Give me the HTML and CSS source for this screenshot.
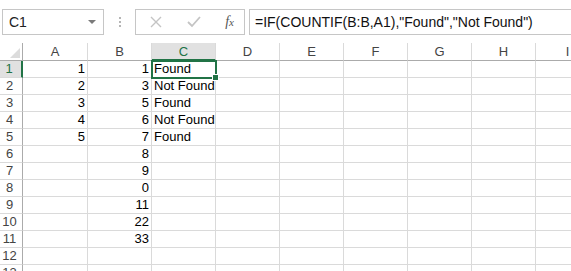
FILE: index.html
```html
<!DOCTYPE html>
<html lang="en">
<head>
  <meta charset="UTF-8" />
  <title>Excel - COUNTIF</title>
  <link rel="stylesheet" href="styles.css">
</head>
<body>

  <div class="toolbar">
    <div class="namebox">
      <span>C1</span>
      <svg class="caret" width="8" height="5" viewBox="0 0 8 5"><path d="M0 0h8L4 4z" fill="#7a7a7a"/></svg>
    </div>
    <div class="dots"><i></i><i></i><i></i></div>
    <div class="fxbtns">
      <svg width="12" height="12" viewBox="0 0 12 12"><path d="M1 1l10 10M11 1L1 11" stroke="#c4c4c4" stroke-width="1.4"/></svg>
      <svg width="14" height="12" viewBox="0 0 14 12"><path d="M1 6l4 4 8-9" stroke="#c4c4c4" stroke-width="1.8" fill="none"/></svg>
      <span class="fx">f<small>x</small></span>
    </div>
    <div class="formula">=IF(COUNTIF(B:B,A1),"Found","Not Found")</div>
  </div>

  <div class="sheet" id="sheet"></div>

  <script>
    const cols = ['A', 'B', 'C', 'D', 'E', 'F', 'G', 'H', 'I'];
    const data = {
      1: { A: 1, B: 1, C: 'Found' },
      2: { A: 2, B: 3, C: 'Not Found' },
      3: { A: 3, B: 5, C: 'Found' },
      4: { A: 4, B: 6, C: 'Not Found' },
      5: { A: 5, B: 7, C: 'Found' },
      6: { B: 8 },
      7: { B: 9 },
      8: { B: 0 },
      9: { B: 11 },
      10: { B: 22 },
      11: { B: 33 }
    };

    const sheet = document.getElementById('sheet');
    let html = '<div class="corner"></div>';
    cols.forEach(c => {
      html += '<div class="colhead' + (c === 'C' ? ' active' : '') + '">' + c + '</div>';
    });
    for (let r = 1; r <= 13; r++) {
      html += '<div class="rowhead' + (r === 1 ? ' active' : '') + '">' + r + '</div>';
      cols.forEach(c => {
        const v = data[r] && data[r][c];
        let cls = 'cell';
        if (typeof v === 'number') cls += ' num';
        if (r === 1 && c === 'C') cls += ' selected';
        html += '<div class="' + cls + '">' + (v === undefined ? '' : v) + '</div>';
      });
    }
    sheet.innerHTML = html;
  </script>

</body>
</html>
```

FILE: styles.css
```css
body {
  margin: 0;
  background: #fff;
  font-family: 'Liberation Sans', Arial, sans-serif;
  color: #000;
  overflow: hidden;
}

.toolbar {
  display: flex;
  align-items: center;
  padding: 9px 0 0 2px;
  height: 26px;
}

.namebox {
  box-sizing: border-box;
  width: 102px;
  height: 26px;
  border: 1px solid #c6c6c6;
  display: flex;
  align-items: center;
  justify-content: space-between;
  padding: 0 7px 0 6px;
  font-size: 14px;
  color: #222;
}

.namebox .caret {
  margin-top: 1px;
}

.dots {
  width: 31px;
  display: flex;
  flex-direction: column;
  align-items: center;
  gap: 2px;
}

.dots i {
  width: 2px;
  height: 2px;
  background: #b5b5b5;
}

.fxbtns {
  box-sizing: border-box;
  width: 110px;
  height: 26px;
  border: 1px solid #c6c6c6;
  display: flex;
  align-items: center;
  justify-content: space-between;
  padding: 0 10px 0 14px;
}

.fx {
  font-family: 'Liberation Serif', serif;
  font-style: italic;
  font-size: 14px;
  color: #555;
}

.fx small {
  font-size: 11px;
}

.formula {
  box-sizing: border-box;
  flex: 1;
  height: 26px;
  margin-left: 4px;
  border: 1px solid #c6c6c6;
  border-right: none;
  padding: 0 0 0 5px;
  font-size: 14px;
  line-height: 24px;
  color: #111;
  white-space: nowrap;
}

.sheet {
  display: grid;
  grid-template-columns: 23px 65px repeat(8, 64px);
  grid-template-rows: 18px;
  grid-auto-rows: 17px;
  margin-top: 8px;
  font-size: 13px;
}

.sheet > div {
  box-sizing: border-box;
  border-right: 1px solid #dadada;
  border-bottom: 1px solid #dadada;
  white-space: nowrap;
  line-height: 16px;
}

.corner {
  position: relative;
  border-bottom-color: #ababab !important;
  border-right-color: #ababab !important;
}

.corner::after {
  content: '';
  position: absolute;
  right: 2px;
  bottom: 2px;
  border-left: 10px solid transparent;
  border-bottom: 10px solid #dcdcdc;
}

.colhead {
  text-align: center;
  color: #444;
  border-bottom-color: #ababab !important;
  line-height: 17px !important;
}

.colhead.active {
  background: #e1e1e1;
  color: #217346;
  border-bottom: 2px solid #217346 !important;
}

.rowhead {
  text-align: center;
  padding-right: 3px;
  color: #444;
  border-right-color: #ababab !important;
}

.rowhead.active {
  background: #e1e1e1;
  color: #217346;
  border-right: 2px solid #217346 !important;
}

.cell {
  padding: 0 2px;
  overflow: visible;
}

.cell.num {
  text-align: right;
}

.selected {
  position: relative;
  outline: 2px solid #217346;
  outline-offset: -1px;
  z-index: 1;
}

.selected::after {
  content: '';
  position: absolute;
  right: -4px;
  bottom: -4px;
  width: 5px;
  height: 5px;
  background: #217346;
  border: 1px solid #fff;
}
```
